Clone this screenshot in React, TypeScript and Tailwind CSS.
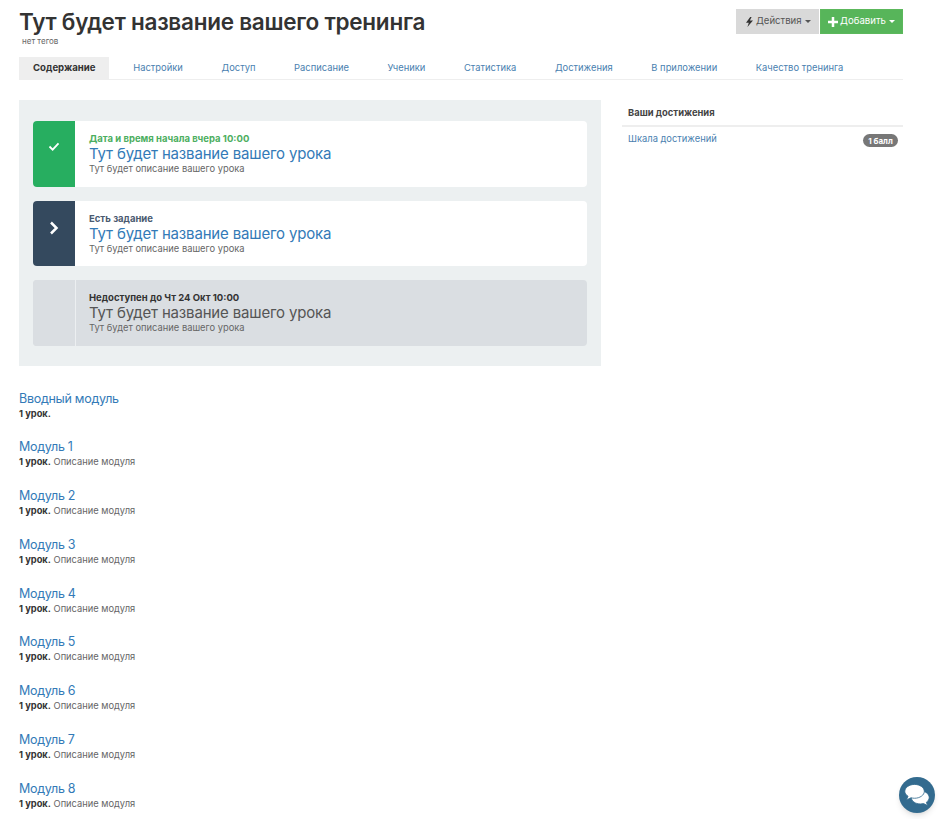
import React from 'react';

const tabs = ['Настройки', 'Доступ', 'Расписание', 'Ученики', 'Статистика', 'Достижения', 'В приложении', 'Качество тренинга'];
const modules = ['Модуль 1', 'Модуль 2', 'Модуль 3', 'Модуль 4', 'Модуль 5', 'Модуль 6', 'Модуль 7', 'Модуль 8'];

const Caret = () => <span className="ml-[3px] inline-block border-x-[3px] border-t-[3px] border-x-transparent border-t-current align-middle" />;

const Lesson = ({ tone, label, labelClass, icon }: { tone: string; label: string; labelClass: string; icon?: React.ReactNode }) => (
  <div className={`flex overflow-hidden rounded-[4px] ${tone === 'done' ? 'h-[66px] bg-white' : tone === 'task' ? 'h-[65px] bg-white' : 'h-[65.5px] bg-[#dadee2]'}`}>
    <div className={`flex shrink-0 items-center justify-center ${tone === 'done' ? 'w-[42px] bg-[#27ae60] pb-[16px]' : tone === 'task' ? 'w-[42px] bg-[#34495e] pb-[11px]' : 'w-[43px] border-r border-[#eceff1] bg-[#dadee2]'}`}>
      {icon}
    </div>
    <div className={`pt-[10px] ${tone === 'off' ? 'pl-[13px]' : 'pl-[14px]'}`}>
      <div className={`text-[9.5px] font-bold leading-[15px] ${labelClass}`}>{label}</div>
      <div className={`text-[15px] leading-[16px] tracking-[-0.17px] ${tone === 'off' ? 'text-[#555]' : 'text-[#337ab7]'}`}>Тут будет название вашего урока</div>
      <div className="text-[9.35px] leading-[14px] text-[#666]">Тут будет описание вашего урока</div>
    </div>
  </div>
);

const Module = ({ title, text }: { title: string; text?: string }) => (
  <div className="mb-[20.75px] h-[28px]">
    <div className="text-[12.5px] leading-[17px] tracking-[-0.28px] text-[#337ab7]">{title}</div>
    <div className="text-[9.3px] leading-[14px] text-[#666]">
      <b className="font-bold text-[#333]">1 урок.</b> {text}
    </div>
  </div>
);

export default function App() {
  return (
    <div className="relative h-[819px] w-[940px] overflow-hidden bg-white pl-[19px] pr-[37px] font-['Inter',sans-serif] text-[#333]">
      <div className="flex h-[57px] justify-between">
        <div>
          <h1 className="pt-[9px] text-[22.500px] font-semibold leading-[26px] tracking-[-0.26px] text-[#333]">Тут будет название вашего тренинга</h1>
          <div className="pl-[3px] pt-[1px] text-[8px] leading-[10px] text-[#666]">нет тегов</div>
        </div>
        <div className="flex gap-[1.500px] pt-[9px]">
          <div className="flex h-[25px] w-[82.500px] items-center justify-center pl-[2px] bg-[#d9d9d9] text-[9.6px] text-[#555]">
            <svg viewBox="0 0 10 14" className="mr-[3px] h-[10px] w-[7px] fill-[#333]"><path d="M6 0 0 8h4L2 14l8-9H5.500L8 0z" /></svg>
            Действия<Caret />
          </div>
          <div className="flex h-[25px] w-[83px] items-center justify-center border border-[#5cb85c] bg-[#57b55a] text-[9.6px] text-white">
            <svg viewBox="0 0 12 12" className="mr-[2px] h-[10px] w-[10px] fill-white"><path d="M4.500 0h3v4.500H12v3H7.500V12h-3V7.500H0v-3h4.500z" /></svg>
            Добавить<Caret />
          </div>
        </div>
      </div>

      <div className="flex h-[23px] border-b border-[#eee] text-[9.4px] text-[#4a7fb0]">
        <div className="mr-[4.500px] flex h-[22px] items-center bg-[#eee] px-[14px] text-[9.6px] font-bold text-[#333]">Содержание</div>
        {tabs.map((t) => (
          <div key={t} className="flex h-[22px] items-center whitespace-nowrap px-[19.300px]">
            {t}
          </div>
        ))}
      </div>

      <div className="mt-[20px] flex h-[266px]">
        <div className="flex h-[265.500px] w-[582px] flex-col gap-[14px] bg-[#ecf0f1] px-[14px] pt-[21px]">
          <Lesson
            tone="done"
            label="Дата и время начала вчера 10:00"
            labelClass="text-[#4cae60]"
            icon={
              <svg viewBox="0 0 12 10" className="h-[9px] w-[12px] fill-none stroke-white stroke-[2]"><path d="M1 5l3.500 3.500L11 1.500" /></svg>
            }
          />
          <Lesson
            tone="task"
            label="Есть задание"
            labelClass="text-[#4a5a70]"
            icon={
              <svg viewBox="0 0 10 14" className="h-[14px] w-[10px] fill-none stroke-white stroke-[2.500]"><path d="M2 1.500 7.500 7 2 12.500" /></svg>
            }
          />
          <Lesson tone="off" label="Недоступен до Чт 24 Окт 10:00" labelClass="text-[#333]" />
        </div>
        <div className="ml-[21px] w-[281px]">
          <div className="h-[27px] border-b-2 border-[#eee] pl-[6px] pt-[6px] text-[9.4px] font-bold leading-[14px] text-[#444]">Ваши достижения</div>
          <div className="flex justify-between px-[5px] pl-[6px] pt-[5px]">
            <span className="text-[9.35px] leading-[14px] text-[#4a7fb0]">Шкала достижений</span>
            <span className="mt-[2px] flex h-[13px] w-[35px] items-center justify-center rounded-full bg-[#777] text-[8px] font-bold text-white">1 балл</span>
          </div>
        </div>
      </div>

      <div className="mt-[23.500px]">
        <Module title="Вводный модуль" />
        {modules.map((m) => (
          <Module key={m} title={m} text="Описание модуля" />
        ))}
      </div>

      <div className="absolute left-[899px] top-[777px] flex h-[36px] w-[36px] items-center justify-center rounded-full bg-[#336b8f] shadow-md">
        <svg viewBox="0 0 32 28" className="h-[24px] w-[26px] fill-white stroke-[#336b8f]">
          <path d="M20 9c6 0 11 3.500 11 8 0 2.500-1.500 4.500-3.500 6l1.500 4-5-2.500c-1.200.3-2.600.5-4 .5-6 0-11-3.500-11-8s5-8 11-8z" />
          <path d="M13 1c6.500 0 12 3.800 12 8.500S19.500 18 13 18c-1.500 0-3-.2-4.300-.6L3 20l2-4.500C2.500 14 1 12 1 9.500 1 4.800 6.500 1 13 1z" />
        </svg>
      </div>
    </div>
  );
}
